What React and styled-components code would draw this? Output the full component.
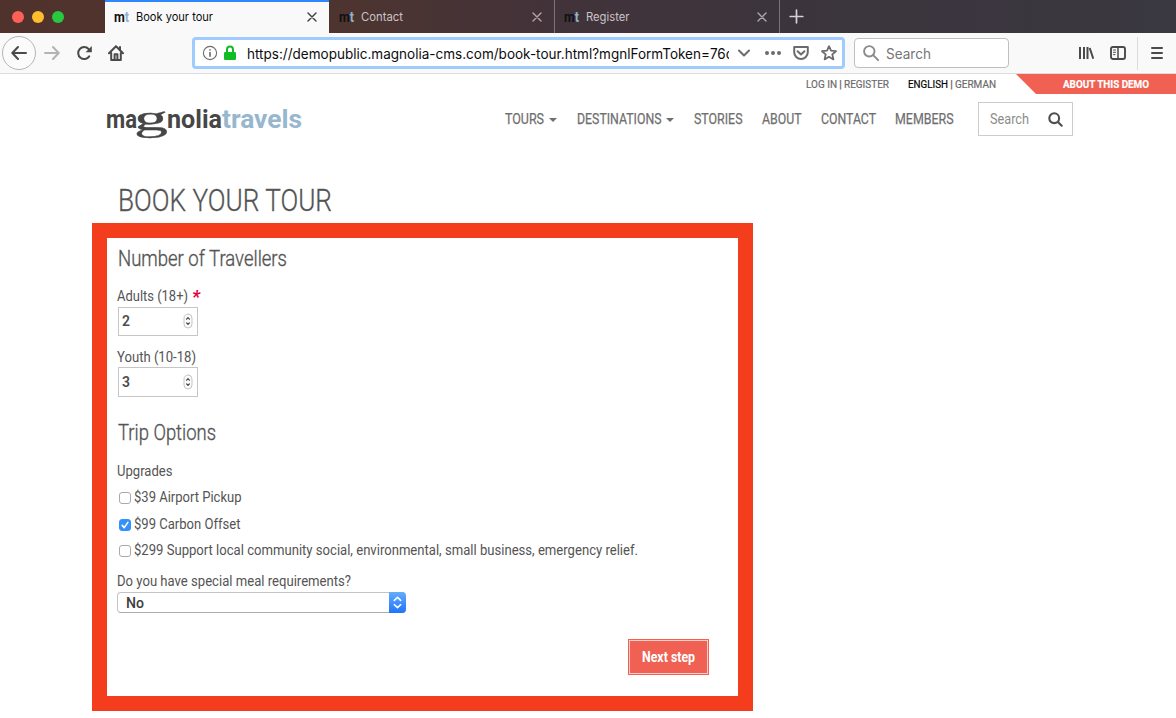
import React, { useLayoutEffect, useRef, useState } from "react";
import styled, { createGlobalStyle } from "styled-components";

const Global = createGlobalStyle`
  * { box-sizing: border-box; }
  body { margin: 0; background: #fff; overflow: hidden; font-family: Roboto, "Liberation Sans", sans-serif; }
  h1, h2, p { margin: 0; font-weight: inherit; }
`;

/* Text condensed to a fixed measure */
const FitBox = styled.span`
  display: block;
  flex: none;
  width: ${(p) => p.$w}px;
  white-space: nowrap;
`;
const FitInner = styled.span`
  display: inline-block;
  transform-origin: 0 50%;
`;
function Fit({ w, className, children }) {
  const ref = useRef(null);
  const [scale, setScale] = useState(1);
  useLayoutEffect(() => {
    setScale(w / parseFloat(getComputedStyle(ref.current).width));
  }, [w]);
  return (
    <FitBox $w={w} className={className}>
      <FitInner ref={ref} style={{ transform: `scaleX(${scale})` }}>{children}</FitInner>
    </FitBox>
  );
}

const Window = styled.div`
  width: 1176px;
  height: 718px;
  overflow: hidden;
  background: #fff;
`;

/* ---------- tab strip ---------- */
const TabStrip = styled.div`
  display: flex;
  height: 33px;
  background: linear-gradient(90deg, #50322c 0, #4e342f 330px, #42333a 560px, #3b343d 800px, #3a3840 100%);
`;
const Lights = styled.div`
  display: flex;
  gap: 8px;
  width: 105px;
  padding: 11px 0 0 12px;
`;
const Light = styled.span`
  width: 12px;
  height: 12px;
  border-radius: 50%;
  background: ${(p) => p.$c};
`;
const Tab = styled.div`
  display: flex;
  align-items: center;
  width: ${(p) => (p.$active ? 224 : 225)}px;
  margin-right: ${(p) => (p.$active ? 1 : 0)}px;
  padding: ${(p) => (p.$active ? "0 12px 1px 9px" : "0 12px 0 9px")};
  border-top: ${(p) => (p.$active ? "2px solid #2e86ff" : "0")};
  border-right: ${(p) => (p.$active ? "0" : "1px solid #7d7377")};
  background: ${(p) => (p.$active ? "#f9f9fa" : "transparent")};
  color: ${(p) => (p.$active ? "#0c0c0d" : "#c9c4c6")};
`;
const TabIcon = styled(Fit)`
  font: 700 15px/20px Roboto, sans-serif;
  color: #111;
  b { color: #8fb3cc; font-weight: 700; }
`;
const TabTitle = styled(Fit)`
  margin-left: 7px;
  margin-right: auto;
  font: 400 11.5px/20px Inter, sans-serif;
`;
const NewTab = styled.div`
  display: flex;
  padding: 9px 0 0 9px;
  color: #d5d1d4;
`;

/* ---------- toolbar ---------- */
const Toolbar = styled.div`
  display: flex;
  align-items: center;
  height: 41px;
  padding-left: 2px;
  border-bottom: 1px solid #dcdcdc;
  background: #f9f9fa;
  color: #4a4a4c;
`;
const Glyph = styled.svg`
  display: block;
  flex: none;
  width: ${(p) => p.$w || 16}px;
  height: ${(p) => p.$h || 16}px;
  margin-left: ${(p) => p.$ml || 0}px;
  fill: none;
  stroke: currentColor;
  stroke-width: ${(p) => p.$sw || 2};
  stroke-linecap: round;
  stroke-linejoin: round;
  color: ${(p) => p.$c || "inherit"};
`;
const BackButton = styled.div`
  display: flex;
  align-items: center;
  justify-content: center;
  width: 34px;
  height: 34px;
  border: 1px solid #b5b5b6;
  border-radius: 50%;
  background: #fbfbfb;
`;
const UrlBar = styled.div`
  display: flex;
  align-items: center;
  width: 653px;
  height: 32px;
  margin-left: 68px;
  border: 3px solid #9fcbff;
  border-radius: 4px;
  background: #fff;
  color: #6b6b6c;
`;
const UrlClip = styled.div`
  width: 482px;
  margin-left: 11px;
  padding-top: 2px;
  overflow: hidden;
`;
const UrlText = styled(Fit)`
  font: 400 14px/24px Inter, sans-serif;
  color: #0c0c0d;
`;
const BrowserSearch = styled.div`
  display: flex;
  align-items: center;
  width: 155px;
  height: 30px;
  margin-left: 9px;
  padding-left: 8px;
  border: 1px solid #bfbfc0;
  border-radius: 4px;
  background: #fff;
`;
const BrowserSearchText = styled(Fit)`
  margin-left: 7px;
  padding-top: 2px;
  font: 400 14px/24px Inter, sans-serif;
  color: #757576;
`;
const Divider = styled.span`
  width: 1px;
  height: 33px;
  margin-left: 11px;
  background: #dcdcdd;
`;

/* ---------- site header ---------- */
const TopBar = styled.div`
  display: flex;
  justify-content: flex-end;
  height: 20px;
  font: 400 11.6px/21px Roboto, sans-serif;
  color: #6a6a6a;
  -webkit-text-stroke: 0.2px;
`;
const TopText = styled(Fit)`
  margin-left: ${(p) => p.$ml || 0}px;
  color: ${(p) => p.$c || "inherit"};
`;
const Ribbon = styled.div`
  width: 160px;
  margin-left: 20px;
  padding-left: 47px;
  background: #f06153;
  clip-path: polygon(0 0, 100% 0, 100% 100%, 20px 100%);
  color: #fff;
  font-weight: 700;
`;
const Header = styled.header`
  display: flex;
  height: 34px;
  margin-top: 8px;
  padding-left: 106px;
`;
const Logo = styled.div`
  display: flex;
  width: 398.5px;
  height: 34px;
  font: 700 26px/34px Roboto, sans-serif;
  color: #464646;
`;
const LogoG = styled(Fit)`
  margin: 0 -1px 0 -3px;
  font: 400 35px/33px "Liberation Serif", serif;
  -webkit-text-stroke: 0.3px #464646;
`;
const LogoBlue = styled(Fit)`
  color: #97b7cf;
`;
const Nav = styled.nav`
  display: flex;
  align-items: center;
  width: 473.5px;
  font: 400 15px/20px Roboto, sans-serif;
  color: #6f6f6f;
  -webkit-text-stroke: 0.25px #6f6f6f;
`;
const NavItem = styled.div`
  display: flex;
  align-items: center;
  margin-right: ${(p) => p.$mr ?? 20}px;
`;
const Caret = styled.i`
  margin: 2px 0 0 5px;
  border: 4px solid transparent;
  border-top-color: #6f6f6f;
  border-bottom: 0;
`;
const SiteSearch = styled.div`
  display: flex;
  align-items: center;
  width: 95px;
  height: 34px;
  padding-left: 11px;
  border: 1px solid #ccc;
  font: 400 15px/20px Roboto, sans-serif;
  color: #8c8c8c;
`;

/* ---------- page ---------- */
const Title = styled.h1`
  margin: 47px 0 4px 118px;
  font: 300 30.5px/36px Roboto, sans-serif;
  color: #545454;
  -webkit-text-stroke: 0.3px #545454;
`;
const FormFrame = styled.form`
  width: 661px;
  height: 488px;
  margin-left: 92px;
  padding: 8px 29px 0 11px;
  border: 15px solid #f43d1d;
  font: 400 15px/20px Roboto, sans-serif;
  color: #545454;
`;
const Section = styled.h2`
  margin-top: ${(p) => p.$mt || 0}px;
  font-size: 21.5px;
  line-height: 26px;
  font-weight: 300;
  -webkit-text-stroke: 0.35px #545454;
`;
const Label = styled.div`
  display: flex;
  align-items: center;
  margin: ${(p) => p.$mt}px 0 0 -0.6px;
  height: 20px;
`;
const Required = styled.b`
  margin-left: 3.6px;
  padding-top: 2px;
  color: #e5003c;
  font: italic 700 18px/20px Roboto, sans-serif;
`;
const NumberField = styled.div`
  display: flex;
  align-items: center;
  justify-content: space-between;
  width: 80px;
  height: ${(p) => p.$h}px;
  margin-top: ${(p) => p.$mt || 0}px;
  padding: 0 4px 1px 2.5px;
  border: 1px solid #c6c6c6;
  font-weight: 600;
  color: #4c4c4c;
`;
const Check = styled.span`
  display: flex;
  width: 12px;
  height: 12px;
  margin: 2px 3px 0 1.6px;
  border: 1px solid ${(p) => (p.$on ? "#3391fb" : "#a9a9a9")};
  border-radius: 3px;
  background: ${(p) => (p.$on ? "#3391fb" : "#fff")};
  color: #fff;
`;
const Select = styled.div`
  display: flex;
  justify-content: space-between;
  width: 289px;
  height: 21px;
  margin: 1px 0 0 -1px;
  padding-left: 8px;
  border: 1px solid #c4c4c4;
  border-right: 0;
  border-bottom-color: #adadad;
  border-radius: 4px;
  font-weight: 500;
  color: #3e3e3e;
`;
const SelectArrows = styled.span`
  display: flex;
  align-items: center;
  justify-content: center;
  width: 17px;
  height: 21px;
  margin-top: -1px;
  border-radius: 0 4px 4px 0;
  background: linear-gradient(#64acfb, #1f74fd);
  color: #fff;
`;
const NextButton = styled.div`
  display: flex;
  align-items: center;
  justify-content: center;
  width: 81px;
  height: 36px;
  margin: 26px 0 0 auto;
  border: 1px solid #f06153;
  background: #f06153;
  box-shadow: inset 0 0 0 1px #fbcdc8;
  color: #fff;
  font-weight: 700;
`;

const CloseIcon = () => (
  <Glyph $w={10} $h={10} viewBox="0 0 10 10" $sw={1.4}>
    <path d="M1 1l8 8M9 1l-8 8" opacity="0.8" />
  </Glyph>
);
const Spinner = () => (
  <Glyph $w={10} $h={16} viewBox="0 0 10 16" $sw={1}>
    <rect x="1" y="1" width="8" height="14" rx="4" stroke="#c6c6c6" fill="#fafafa" />
    <path d="M3.6 6.2L5 4.7l1.4 1.5M3.6 9.9L5 11.4l1.4-1.5" stroke="#444" strokeWidth="1.2" />
  </Glyph>
);

function BrowserTab({ active, title, w }) {
  return (
    <Tab $active={active}>
      <TabIcon w={15}>m<b>t</b></TabIcon>
      <TabTitle w={w}>{title}</TabTitle>
      <CloseIcon />
    </Tab>
  );
}

function Option({ mt, on, w, children }) {
  return (
    <Label $mt={mt}>
      <Check $on={on}>
        {on && (
          <Glyph $w={10} $h={10} viewBox="0 0 10 10" $sw={1.6}>
            <path d="M2.2 5.4l2 2.2L7.9 2.4" />
          </Glyph>
        )}
      </Check>
      <Fit w={w}>{children}</Fit>
    </Label>
  );
}

export default function App() {
  return (
    <Window>
      <Global />
      <TabStrip>
        <Lights>
          <Light $c="#ff5f57" />
          <Light $c="#ffbd2e" />
          <Light $c="#28c940" />
        </Lights>
        <BrowserTab active title="Book your tour" w={77} />
        <BrowserTab title="Contact" w={42} />
        <BrowserTab title="Register" w={43.5} />
        <NewTab>
          <Glyph $w={15} $h={15} viewBox="0 0 15 15" $sw={1.7}>
            <path d="M7.5 1.2v12.6M1.2 7.5h12.6" />
          </Glyph>
        </NewTab>
      </TabStrip>

      <Toolbar>
        <BackButton>
          <Glyph viewBox="0 0 16 16"><path d="M15 8H1.5M7 2L1.3 8 7 14" /></Glyph>
        </BackButton>
        <Glyph $ml={8} $c="#b4b4b5" viewBox="0 0 16 16"><path d="M1 8h13.5M9 2l5.7 6L9 14" /></Glyph>
        <Glyph $ml={16} viewBox="0 0 16 16">
          <path d="M12.6 4A6 6 0 1 0 13.2 11.4" />
          <path d="M15.8 1v6.2H9.6z" fill="currentColor" stroke="none" />
        </Glyph>
        <Glyph $ml={16} viewBox="0 0 16 16">
          <path d="M1 8.3L8 1.3l7 7M3.2 8v7h9.6V8" />
          <path d="M6.6 14.5V9.2h2.8v5.3M12 2v3" />
        </Glyph>
        <UrlBar>
          <Glyph $ml={7} viewBox="0 0 16 16" $sw={1.1}>
            <circle cx="8" cy="8" r="6.6" />
            <path d="M8 7.5v3.8M8 4.8v.1" strokeWidth="1.6" />
          </Glyph>
          <Glyph $ml={6} $w={12} $c="#12bc26" viewBox="0 0 12 16">
            <path d="M3 8V4.6a3 3 0 0 1 6 0V8" />
            <rect x="0" y="7" width="12" height="8" rx="1.2" fill="currentColor" stroke="none" />
          </Glyph>
          <UrlClip>
            <UrlText w={487}>https://demopublic.magnolia-cms.com/book-tour.html?mgnlFormToken=76d</UrlText>
          </UrlClip>
          <Glyph $ml={7} viewBox="0 0 16 16"><path d="M3 5.5l5 5 5-5" /></Glyph>
          <Glyph $ml={13} viewBox="0 0 16 16">
            <g fill="currentColor" stroke="none">
              <circle cx="2" cy="8" r="2" /><circle cx="8" cy="8" r="2" /><circle cx="14" cy="8" r="2" />
            </g>
          </Glyph>
          <Glyph $ml={12} viewBox="0 0 16 16">
            <path d="M1.2 2h13.6v5.2a6.8 6.8 0 0 1-13.6 0z" />
            <path d="M4.6 6.3L8 9.5l3.4-3.2" />
          </Glyph>
          <Glyph $ml={12} viewBox="0 0 16 16" $sw={1.8}>
            <path d="M8 1.2l2 4.5 5 .5-3.7 3.2 1.1 5L8 11.8l-4.4 2.6 1.1-5L1 6.2l5-.5z" />
          </Glyph>
        </UrlBar>
        <BrowserSearch>
          <Glyph $c="#8a8a8b" viewBox="0 0 16 16" $sw={1.9}>
            <circle cx="6.3" cy="6.3" r="5.2" /><path d="M10.2 10.2l4.9 4.9" />
          </Glyph>
          <BrowserSearchText w={45}>Search</BrowserSearchText>
        </BrowserSearch>
        <Glyph $ml={69} viewBox="0 0 16 16">
          <path d="M2 2v12M6 2v12M9.5 2v12M11.7 3l3.6 10.7" strokeLinecap="butt" />
        </Glyph>
        <Glyph $ml={16} viewBox="0 0 16 16" $sw={1.9}>
          <rect x="1" y="2" width="14" height="12" rx="2" />
          <path d="M8 2v12" strokeWidth="1.5" /><path d="M3.5 5h2M3.5 7.3h2M3.5 9.6h1.5" strokeWidth="1" />
        </Glyph>
        <Divider />
        <Glyph $ml={11} viewBox="0 0 16 16"><path d="M3 3h10M3 8h10M3 13h10" /></Glyph>
      </Toolbar>

      <TopBar>
        <TopText w={31}>LOG IN</TopText>
        <TopText $ml={2} w={3}>|</TopText>
        <TopText $ml={2} w={45}>REGISTER</TopText>
        <TopText $ml={19} w={40} $c="#000">ENGLISH</TopText>
        <TopText $ml={2} w={3}>|</TopText>
        <TopText $ml={2} w={41}>GERMAN</TopText>
        <Ribbon><Fit w={86}>ABOUT THIS DEMO</Fit></Ribbon>
      </TopBar>

      <Header>
        <Logo>
          <Fit w={31}>ma</Fit>
          <LogoG w={34}>g</LogoG>
          <Fit w={55}>nolia</Fit>
          <LogoBlue w={80}>travels</LogoBlue>
        </Logo>
        <Nav>
          <NavItem><Fit w={39}>TOURS</Fit><Caret /></NavItem>
          <NavItem><Fit w={84.5}>DESTINATIONS</Fit><Caret /></NavItem>
          <NavItem $mr={19}><Fit w={48.5}>STORIES</Fit></NavItem>
          <NavItem $mr={19.5}><Fit w={39.5}>ABOUT</Fit></NavItem>
          <NavItem $mr={19}><Fit w={55}>CONTACT</Fit></NavItem>
          <NavItem $mr={0}><Fit w={58.5}>MEMBERS</Fit></NavItem>
        </Nav>
        <SiteSearch>
          <Fit w={39}>Search</Fit>
          <Glyph $ml={19} $c="#4f4f4f" $w={15} $h={15} viewBox="0 0 15 15" $sw={2.1}>
            <circle cx="6.2" cy="6.2" r="4.9" /><path d="M9.9 9.9l3.8 3.8" />
          </Glyph>
        </SiteSearch>
      </Header>

      <Title><Fit w={214}>BOOK YOUR TOUR</Fit></Title>
      <FormFrame>
        <Section><Fit w={169}>Number of Travellers</Fit></Section>
        <Label $mt={14}><Fit w={71}>Adults (18+)</Fit><Required>*</Required></Label>
        <NumberField $h={29} $mt={1}><Fit w={8}>2</Fit><Spinner /></NumberField>
        <Label $mt={11}><Fit w={79}>Youth (10-18)</Fit></Label>
        <NumberField $h={30}><Fit w={8}>3</Fit><Spinner /></NumberField>
        <Section $mt={23}><Fit w={98}>Trip Options</Fit></Section>
        <Label $mt={15}><Fit w={55.5}>Upgrades</Fit></Label>
        <Option mt={6} w={107.5}>$39 Airport Pickup</Option>
        <Option mt={7} w={106.5} on>$99 Carbon Offset</Option>
        <Option mt={6} w={504}>$299 Support local community social, environmental, small business, emergency relief.</Option>
        <Label $mt={11}><Fit w={234}>Do you have special meal requirements?</Fit></Label>
        <Select>
          <Fit w={18}>No</Fit>
          <SelectArrows>
            <Glyph $w={9} $h={13} viewBox="0 0 9 13" $sw={1.5}>
              <path d="M1.3 4.4l3.2-3 3.2 3M1.3 8.6l3.2 3 3.2-3" />
            </Glyph>
          </SelectArrows>
        </Select>
        <NextButton><Fit w={53}>Next step</Fit></NextButton>
      </FormFrame>
    </Window>
  );
}
